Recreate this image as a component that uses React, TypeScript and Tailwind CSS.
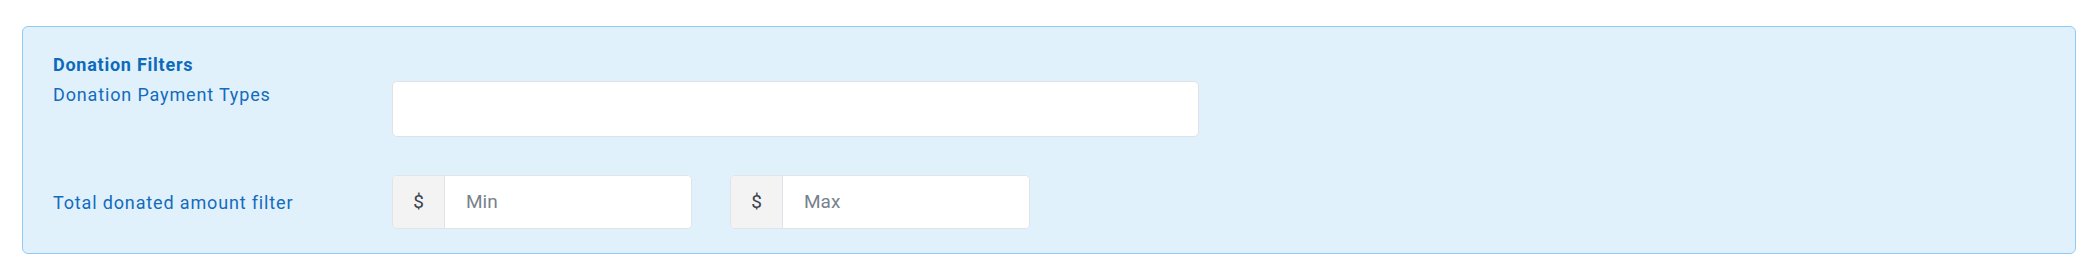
export default function App() {
  return (
    <div className="w-[2092px] h-[272px] bg-white pt-[26px] pl-[22px] font-['Roboto',sans-serif]">
      <div className="w-[2054px] h-[228px] rounded-md border border-[#90cbf7] bg-[#e1f1fc] px-[30px] pt-[24px] pb-[24px]">
        <h3 className="text-[18px] leading-[27px] font-bold tracking-[0.75px] text-[#0d6abb] mb-[3px]">Donation Filters</h3>

        {/* payment types */}
        <div className="flex items-start">
          <label className="w-[339px] text-[18px] leading-[27px] tracking-[0.85px] text-[#136bbd]">Donation Payment Types</label>
          <div className="w-[807px] h-[56px] rounded-[5px] border border-[#dfe3e8] bg-white" />
        </div>

        {/* amount range */}
        <div className="flex items-center mt-[38px]">
          <label className="w-[339px] text-[18px] leading-[27px] tracking-[0.85px] text-[#136bbd]">Total donated amount filter</label>
          <div className="flex gap-[38px]">
            <AmountInput placeholder="Min" />
            <AmountInput placeholder="Max" />
          </div>
        </div>
      </div>
    </div>
  );
}

function AmountInput({ placeholder }: { placeholder: string }) {
  return (
    <div className="flex w-[300px] h-[54px] rounded-[5px] border border-[#e0e3e7] bg-white overflow-hidden">
      <span className="w-[52px] flex items-center justify-center bg-[#f3f3f3] border-r border-[#e0e3e7] text-[19px] text-[#3a424c]">$</span>
      <input
        placeholder={placeholder}
        className="flex-1 min-w-0 pl-[21px] text-[19px] text-[#333] placeholder:text-[#78818c] outline-none bg-white"
      />
    </div>
  );
}
